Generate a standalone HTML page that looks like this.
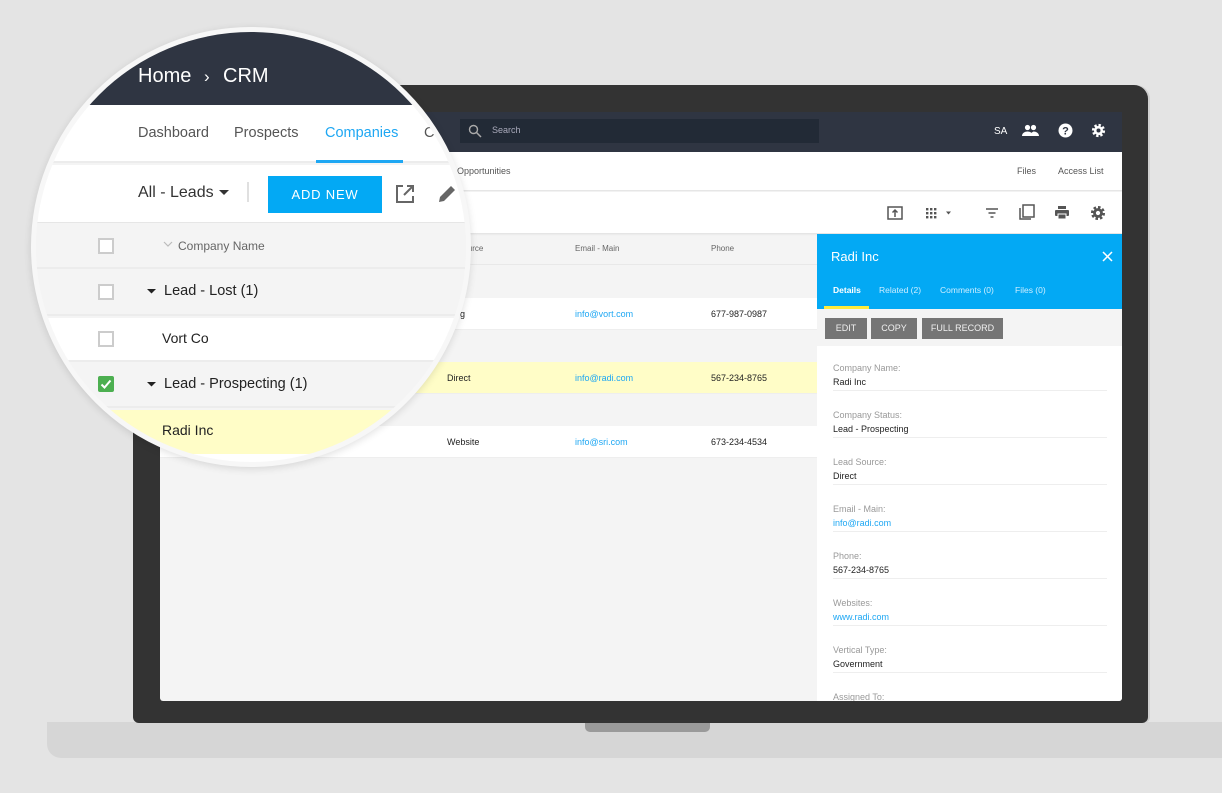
<!DOCTYPE html>
<html><head><meta charset="utf-8"><style>
*{margin:0;padding:0;box-sizing:border-box}
body{width:1222px;height:793px;background:#e4e4e4;position:relative;overflow:hidden;font-family:"Liberation Sans",sans-serif}
.a{position:absolute}
.t{position:absolute;white-space:nowrap}
.s9{font-size:9px;color:#222}
.lbl{font-size:9px;color:#999}
.blue{color:#1ea7f3}
.ln{position:absolute;left:16px;right:15px;height:1px;background:#eee}
</style></head><body>
<!-- laptop base -->
<div class="a" style="left:47px;top:722px;width:1200px;height:36px;background:#d6d6d6;border-radius:0 0 0 14px"></div>
<div class="a" style="left:585px;top:722px;width:125px;height:10px;background:#9a9a9a;border-radius:0 0 5px 5px"></div>
<!-- laptop body -->
<div class="a" style="left:133px;top:85px;width:1015px;height:638px;background:#333;border-radius:14px 14px 6px 6px;box-shadow:2px 0 0 #d0d0d0"></div>
<!-- screen -->
<div class="a" style="left:160px;top:112px;width:962px;height:589px;background:#f4f4f4;overflow:hidden;border-radius:0 0 3px 3px">
 <div class="a" style="left:0;top:0;width:962px;height:40px;background:#2f3542"></div>
 <div class="a" style="left:300px;top:7px;width:359px;height:24px;background:#222a36"></div>
 <svg class="a" style="left:308px;top:12px" width="14" height="14" viewBox="0 0 14 14"><circle cx="5.5" cy="5.5" r="4" fill="none" stroke="#aaa" stroke-width="1.4"/><path d="M8.5 8.5L13 13" stroke="#aaa" stroke-width="1.5"/></svg>
 <div class="t" style="left:332px;top:13px;font-size:9px;color:#aab">Search</div>
 <div class="t" style="left:834px;top:14px;font-size:10px;color:#fff">SA</div>
 <svg class="a" style="left:862px;top:12px" width="17" height="13" viewBox="0 0 17 13"><circle cx="5.5" cy="3.5" r="2.6" fill="#fff"/><circle cx="11.5" cy="3.5" r="2.6" fill="#fff"/><path d="M0 12c0-3 3-4.5 5.5-4.5S11 9 11 12zM8 12c0-2 1-3 3.5-4.5 2.5 0 5.5 1.5 5.5 4.5z" fill="#fff"/></svg>
 <svg class="a" style="left:898px;top:11px" width="15" height="15" viewBox="0 0 15 15"><circle cx="7.5" cy="7.5" r="7" fill="#fff"/><text x="7.5" y="11.5" font-size="11" font-weight="bold" text-anchor="middle" fill="#2f3542" font-family="Liberation Sans">?</text></svg>
 <svg class="a" style="left:931px;top:11px" width="15" height="15" viewBox="0 0 15 15"><circle cx="7.5" cy="7.5" r="5" fill="none" stroke="#fff" stroke-width="3.2" stroke-dasharray="2.2 1.7"/><circle cx="7.5" cy="7.5" r="4.6" fill="#fff"/><circle cx="7.5" cy="7.5" r="2" fill="#2f3542"/></svg>
 <div class="a" style="left:0;top:40px;width:962px;height:39px;background:#fff;border-bottom:1px solid #e6e6e6"></div>
 <div class="t" style="left:297px;top:54px;font-size:9px;color:#555">Opportunities</div>
 <div class="t" style="left:857px;top:54px;font-size:9px;color:#555">Files</div>
 <div class="t" style="left:898px;top:54px;font-size:9px;color:#555">Access List</div>
 <div class="a" style="left:0;top:80px;width:962px;height:41px;background:#fff;box-shadow:0 1px 2px #ddd"></div>
 <svg class="a" style="left:726px;top:92px" width="18" height="18" viewBox="0 0 18 18" fill="none" stroke="#555" stroke-width="1.5"><rect x="2" y="3" width="14" height="12"/><path d="M9 13V6M6.5 8.5L9 6l2.5 2.5"/></svg>
 <svg class="a" style="left:764px;top:95px" width="30" height="12" viewBox="0 0 30 12" fill="#555"><rect x="2" y="1" width="2.4" height="2.4"/><rect x="6" y="1" width="2.4" height="2.4"/><rect x="10" y="1" width="2.4" height="2.4"/><rect x="2" y="5" width="2.4" height="2.4"/><rect x="6" y="5" width="2.4" height="2.4"/><rect x="10" y="5" width="2.4" height="2.4"/><rect x="2" y="9" width="2.4" height="2.4"/><rect x="6" y="9" width="2.4" height="2.4"/><rect x="10" y="9" width="2.4" height="2.4"/><path d="M27 4.5l-2.5 3-2.5-3z"/></svg>
 <svg class="a" style="left:824px;top:94px" width="16" height="14" viewBox="0 0 16 14" stroke="#555" stroke-width="1.5"><path d="M2 3h12M4.5 7h7M6.5 11h3"/></svg>
 <svg class="a" style="left:858px;top:91px" width="18" height="18" viewBox="0 0 18 18" fill="none" stroke="#555" stroke-width="1.5"><rect x="5" y="2" width="11" height="12"/><path d="M2 5v11h11"/></svg>
 <svg class="a" style="left:894px;top:93px" width="16" height="15" viewBox="0 0 16 15" fill="#555"><rect x="4" y="1" width="8" height="3"/><rect x="1" y="5" width="14" height="6" rx="1"/><rect x="4" y="9" width="8" height="5" fill="#555" stroke="#fff" stroke-width="1"/></svg>
 <svg class="a" style="left:930px;top:93px" width="16" height="16" viewBox="0 0 15 15"><circle cx="7.5" cy="7.5" r="5" fill="none" stroke="#555" stroke-width="3.2" stroke-dasharray="2.2 1.7"/><circle cx="7.5" cy="7.5" r="4.6" fill="#555"/><circle cx="7.5" cy="7.5" r="2" fill="#fff"/></svg>
 <!-- table -->
 <div class="a" style="left:0;top:122px;width:657px;height:31px;border-bottom:1px solid #e8e8e8"></div>
 <div class="t" style="left:298px;top:132px;font-size:8px;color:#666">Source</div>
 <div class="t" style="left:415px;top:132px;font-size:8px;color:#666">Email - Main</div>
 <div class="t" style="left:551px;top:132px;font-size:8px;color:#666">Phone</div>
 <div class="a" style="left:0;top:186px;width:657px;height:32px;background:#fff;border-bottom:1px solid #eee"></div>
 <div class="t s9" style="left:287px;top:197px">Blog</div>
 <div class="t s9 blue" style="left:415px;top:197px">info@vort.com</div>
 <div class="t s9" style="left:551px;top:197px">677-987-0987</div>
 <div class="a" style="left:0;top:250px;width:657px;height:32px;background:#fffdc7;border-bottom:1px solid #eee"></div>
 <div class="t s9" style="left:287px;top:261px">Direct</div>
 <div class="t s9 blue" style="left:415px;top:261px">info@radi.com</div>
 <div class="t s9" style="left:551px;top:261px">567-234-8765</div>
 <div class="a" style="left:0;top:314px;width:657px;height:32px;background:#fff;border-bottom:1px solid #eee"></div>
 <div class="t s9" style="left:287px;top:325px">Website</div>
 <div class="t s9 blue" style="left:415px;top:325px">info@sri.com</div>
 <div class="t s9" style="left:551px;top:325px">673-234-4534</div>
 <!-- side panel -->
 <div class="a" style="left:657px;top:122px;width:305px;height:467px;background:#fff">
  <div class="a" style="left:0;top:0;width:305px;height:75px;background:#03a9f4"></div>
  <div class="t" style="left:14px;top:15px;font-size:13px;color:#fff">Radi Inc</div>
  <svg class="a" style="left:285px;top:17px" width="11" height="11" viewBox="0 0 11 11" stroke="#fff" stroke-width="1.5"><path d="M1 1l9 9M10 1l-9 9"/></svg>
  <div class="t" style="left:16px;top:51px;font-size:8.5px;color:#fff;font-weight:bold">Details</div>
  <div class="t" style="left:62px;top:51px;font-size:8.5px;color:#cfeeff">Related (2)</div>
  <div class="t" style="left:123px;top:51px;font-size:8.5px;color:#cfeeff">Comments (0)</div>
  <div class="t" style="left:198px;top:51px;font-size:8.5px;color:#cfeeff">Files (0)</div>
  <div class="a" style="left:7px;top:72px;width:45px;height:3px;background:#ffeb3b"></div>
  <div class="a" style="left:0;top:75px;width:305px;height:37px;background:#f4f4f4"></div>
  <div class="a" style="left:8px;top:84px;width:42px;height:21px;background:#757575;color:#f0f0f0;font-size:9px;text-align:center;line-height:21px">EDIT</div>
  <div class="a" style="left:54px;top:84px;width:46px;height:21px;background:#757575;color:#f0f0f0;font-size:9px;text-align:center;line-height:21px">COPY</div>
  <div class="a" style="left:105px;top:84px;width:81px;height:21px;background:#757575;color:#f0f0f0;font-size:9px;text-align:center;line-height:21px">FULL RECORD</div>
  <div class="t lbl" style="left:16px;top:129px">Company Name:</div><div class="t s9" style="left:16px;top:143px">Radi Inc</div><div class="ln" style="top:156px"></div>
  <div class="t lbl" style="left:16px;top:176px">Company Status:</div><div class="t s9" style="left:16px;top:190px">Lead - Prospecting</div><div class="ln" style="top:203px"></div>
  <div class="t lbl" style="left:16px;top:223px">Lead Source:</div><div class="t s9" style="left:16px;top:237px">Direct</div><div class="ln" style="top:250px"></div>
  <div class="t lbl" style="left:16px;top:270px">Email - Main:</div><div class="t s9 blue" style="left:16px;top:284px">info@radi.com</div><div class="ln" style="top:297px"></div>
  <div class="t lbl" style="left:16px;top:317px">Phone:</div><div class="t s9" style="left:16px;top:331px">567-234-8765</div><div class="ln" style="top:344px"></div>
  <div class="t lbl" style="left:16px;top:364px">Websites:</div><div class="t s9 blue" style="left:16px;top:378px">www.radi.com</div><div class="ln" style="top:391px"></div>
  <div class="t lbl" style="left:16px;top:411px">Vertical Type:</div><div class="t s9" style="left:16px;top:425px">Government</div><div class="ln" style="top:438px"></div>
  <div class="t lbl" style="left:16px;top:458px">Assigned To:</div>
 </div>
</div>
<!-- magnifier circle -->
<div class="a" style="left:31px;top:27px;width:440px;height:440px;border-radius:50%;border:5px solid #f7f7f7;overflow:hidden;background:#f4f4f4;box-shadow:0 2px 8px rgba(0,0,0,.12)">
 <div style="position:absolute;left:-36px;top:-32px;width:600px;height:600px">
  <div class="a" style="left:0;top:0;width:600px;height:105px;background:#2f3542"></div>
  <div class="t" style="left:138px;top:65px;font-size:20px;color:#fff">Home</div>
  <div class="t" style="left:204px;top:67px;font-size:17px;color:#fff">›</div>
  <div class="t" style="left:223px;top:65px;font-size:20px;color:#fff">CRM</div>
  <div class="a" style="left:0;top:105px;width:600px;height:58px;background:#fff;border-bottom:2px solid #ececec"></div>
  <div class="t" style="left:138px;top:125px;font-size:14.5px;color:#555">Dashboard</div>
  <div class="t" style="left:234px;top:125px;font-size:14.5px;color:#555">Prospects</div>
  <div class="t" style="left:325px;top:125px;font-size:14.5px;color:#1ea7f3">Companies</div>
  <div class="t" style="left:424px;top:125px;font-size:14.5px;color:#555">Contacts</div>
  <div class="a" style="left:316px;top:160px;width:87px;height:3px;background:#1ea7f3"></div>
  <div class="a" style="left:0;top:165px;width:600px;height:57px;background:#fff;box-shadow:0 2px 2px #e4e4e4"></div>
  <div class="t" style="left:138px;top:184px;font-size:16px;color:#333">All - Leads</div>
  <svg class="a" style="left:219px;top:190px" width="10" height="6"><path d="M0 0h10L5 5z" fill="#333"/></svg>
  <div class="a" style="left:247px;top:182px;width:2px;height:20px;background:#e0e0e0"></div>
  <div class="a" style="left:268px;top:176px;width:114px;height:37px;background:#03a9f4;color:#fff;font-size:13px;letter-spacing:.8px;text-align:center;line-height:37px">ADD NEW</div>
  <svg class="a" style="left:394px;top:183px" width="22" height="22" viewBox="0 0 22 22" fill="none" stroke="#666" stroke-width="2"><path d="M9 3H3v16h16v-6"/><path d="M13 3h6v6M19 3L10 12"/></svg>
  <svg class="a" style="left:436px;top:183px" width="22" height="22" viewBox="0 0 22 22"><path d="M3 19l1-5L15 3l4 4L8 18z" fill="#666"/></svg>
  <div class="a" style="left:0;top:223px;width:600px;height:46px;background:#f4f4f4;border-bottom:2px solid #ececec"></div>
  <div class="a" style="left:98px;top:238px;width:16px;height:16px;border:2px solid #ccc;background:#fff"></div>
  <svg class="a" style="left:163px;top:241px" width="10" height="7"><path d="M1 1l4 4 4-4" fill="none" stroke="#bbb" stroke-width="1.2"/></svg>
  <div class="t" style="left:178px;top:239px;font-size:12px;color:#666">Company Name</div>
  <div class="a" style="left:0;top:271px;width:600px;height:45px;background:#f4f4f4;border-bottom:2px solid #ececec"></div>
  <div class="a" style="left:98px;top:284px;width:16px;height:16px;border:2px solid #ccc;background:#fff"></div>
  <svg class="a" style="left:147px;top:289px" width="9" height="5"><path d="M0 0h9L4.5 4.5z" fill="#222"/></svg>
  <div class="t" style="left:164px;top:283px;font-size:14.5px;color:#222">Lead - Lost (1)</div>
  <div class="a" style="left:0;top:318px;width:600px;height:44px;background:#fff;border-bottom:2px solid #ececec"></div>
  <div class="a" style="left:98px;top:331px;width:16px;height:16px;border:2px solid #ccc;background:#fff"></div>
  <div class="t" style="left:162px;top:330px;font-size:14px;color:#222">Vort Co</div>
  <div class="a" style="left:0;top:364px;width:600px;height:44px;background:#f4f4f4;border-bottom:2px solid #ececec"></div>
  <div class="a" style="left:98px;top:376px;width:16px;height:16px;background:#4caf50;border-radius:2px"></div>
  <svg class="a" style="left:98px;top:376px" width="16" height="16"><path d="M3.5 8.5l3 3 6-7" fill="none" stroke="#fff" stroke-width="2"/></svg>
  <svg class="a" style="left:147px;top:382px" width="9" height="5"><path d="M0 0h9L4.5 4.5z" fill="#222"/></svg>
  <div class="t" style="left:164px;top:376px;font-size:14.5px;color:#222">Lead - Prospecting (1)</div>
  <div class="a" style="left:0;top:410px;width:600px;height:44px;background:#fffdc7"></div>
  <div class="t" style="left:162px;top:422px;font-size:14px;color:#222">Radi Inc</div>
  <div class="a" style="left:0;top:454px;width:600px;height:60px;background:#fff"></div>
 </div>
</div>
</body></html>
